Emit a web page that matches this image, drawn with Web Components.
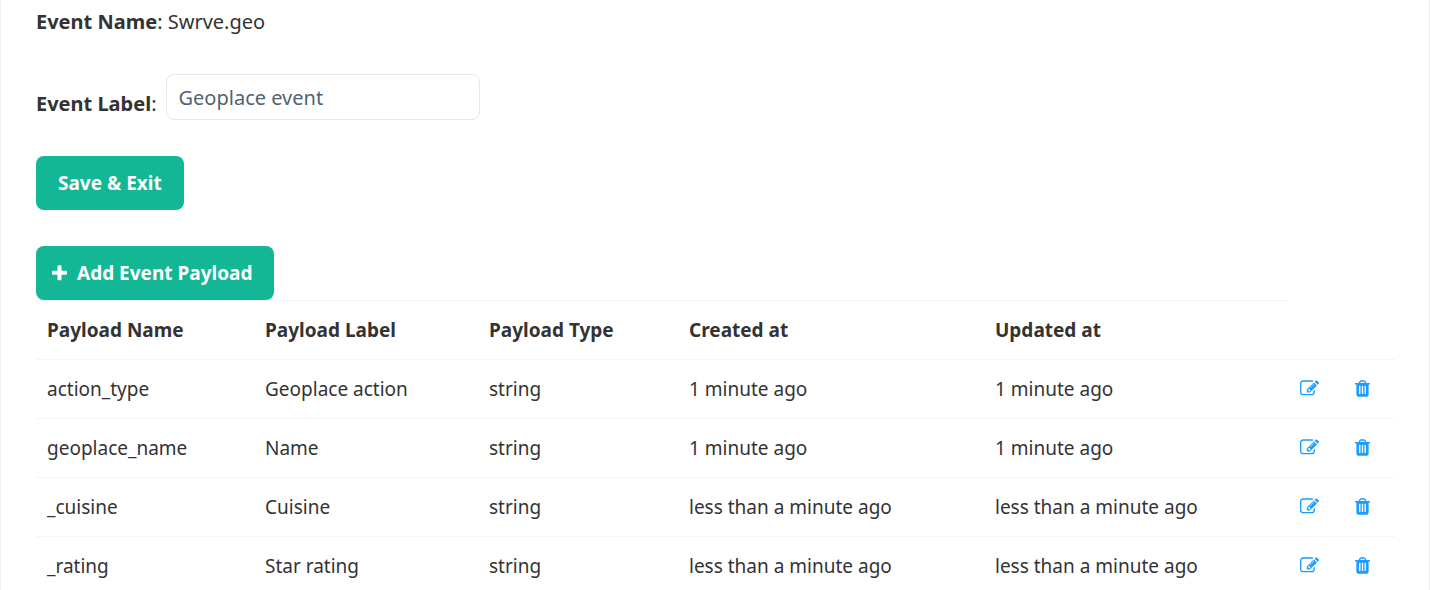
<!DOCTYPE html>
<html lang="en">
<head>
<meta charset="utf-8">
<title>Edit event</title>
<style>
  html { scrollbar-width: none; }
  body { margin: 0; background: #fff; color: #333; font: 20px/28px "Noto Sans", sans-serif; }
</style>
</head>
<body>
<event-page></event-page>
<script>
const ICONS = {
  plus: 'M1600 736v192q0 40-28 68t-68 28h-416v416q0 40-28 68t-68 28h-192q-40 0-68-28t-28-68v-416h-416q-40 0-68-28t-28-68v-192q0-40 28-68t68-28h416v-416q0-40 28-68t68-28h192q40 0 68 28t28 68v416h416q40 0 68 28t28 68z',
  edit: 'M888 1184l116-116-152-152-116 116v56h96v96h56zm440-720q-16-16-33 1l-350 350q-17 17-1 33t33-1l350-350q17-17 1-33zm80 594v190q0 119-84.5 203.5t-203.5 84.5h-832q-119 0-203.5-84.5t-84.5-203.5v-832q0-119 84.5-203.5t203.5-84.5h832q63 0 117 25 15 7 18 23 3 17-9 29l-49 49q-14 14-32 8-23-6-45-6h-832q-66 0-113 47t-47 113v832q0 66 47 113t113 47h832q66 0 113-47t47-113v-126q0-13 9-22l64-64q15-15 35-7t20 29zm-96-738l288 288-672 672h-288v-288zm444 132l-92 92-288-288 92-92q28-28 68-28t68 28l152 152q28 28 28 68t-28 68z',
  trash: 'M704 1376v-704q0-14-9-23t-23-9h-64q-14 0-23 9t-9 23v704q0 14 9 23t23 9h64q14 0 23-9t9-23zm256 0v-704q0-14-9-23t-23-9h-64q-14 0-23 9t-9 23v704q0 14 9 23t23 9h64q14 0 23-9t9-23zm256 0v-704q0-14-9-23t-23-9h-64q-14 0-23 9t-9 23v704q0 14 9 23t23 9h64q14 0 23-9t9-23zm-544-992h448l-48-117q-7-9-17-11h-317q-10 2-17 11zm928 32v64q0 14-9 23t-23 9h-96v948q0 83-47 143.5t-113 60.5h-832q-66 0-113-58.5t-47-141.5v-952h-96q-14 0-23-9t-9-23v-64q0-14 9-23t23-9h309l70-167q15-37 54-63t79-26h320q40 0 79 26t54 63l70 167h309q14 0 23 9t9 23z'
};

class UiIcon extends HTMLElement {
  connectedCallback() {
    this.attachShadow({ mode: 'open' }).innerHTML = `
      <style>
        :host { display: block; width: 19px; height: 19px; }
        svg { display: block; width: 100%; height: 100%; fill: currentColor; }
      </style>
      <svg viewBox="0 0 1792 1792" aria-hidden="true"><path d="${ICONS[this.getAttribute('name')]}"/></svg>`;
  }
}
customElements.define('ui-icon', UiIcon);

class UiButton extends HTMLElement {
  connectedCallback() {
    this.attachShadow({ mode: 'open' }).innerHTML = `
      <style>
        :host { display: block; }
        button { display: flex; align-items: center; height: 54px; padding: 0 22px; border: 0; border-radius: 8px;
          background: #13b795; color: #fff; font: 700 19px/28px "Noto Sans", sans-serif; cursor: pointer; }
        :host([icon]) button { padding-left: 14px; gap: 8px; }
      </style>
      <button type="button">${this.hasAttribute('icon') ? `<ui-icon name="${this.getAttribute('icon')}"></ui-icon>` : ''}<span><slot></slot></span></button>`;
  }
}
customElements.define('ui-button', UiButton);

class EventField extends HTMLElement {
  connectedCallback() {
    this.attachShadow({ mode: 'open' }).innerHTML = `
      <style>
        :host { display: flex; align-items: flex-end; gap: 9px; }
        label { padding-bottom: 2px; }
        input { box-sizing: border-box; width: 314px; height: 46px; padding: 0 12px; border: 1px solid #e3e8eb;
          border-radius: 8px; background: #fff; color: #506372; font: 20px/28px "Noto Sans", sans-serif; }
      </style>
      <label for="field"><b>${this.getAttribute('label')}</b>:</label>
      <input id="field" type="text" value="${this.getAttribute('value')}">`;
  }
}
customElements.define('event-field', EventField);

class PayloadTable extends HTMLElement {
  connectedCallback() {
    const rows = [
      ['action_type', 'Geoplace action', 'string', '1 minute ago', '1 minute ago'],
      ['geoplace_name', 'Name', 'string', '1 minute ago', '1 minute ago'],
      ['_cuisine', 'Cuisine', 'string', 'less than a minute ago', 'less than a minute ago'],
      ['_rating', 'Star rating', 'string', 'less than a minute ago', 'less than a minute ago']
    ];
    this.attachShadow({ mode: 'open' }).innerHTML = `
      <style>
        :host { display: block; font-size: 19px; }
        table { width: 100%; table-layout: fixed; border-collapse: separate; border-spacing: 0; }
        th, td { box-sizing: border-box; height: 59px; padding: 0 11px; border-top: 1px solid #f3f6f8;
          text-align: left; vertical-align: middle; white-space: nowrap; }
        th { font-weight: 700; }
        a { display: block; width: 19px; padding-bottom: 2px; color: #189eff; }
      </style>
      <table>
        <colgroup>
          <col style="width:218px"><col style="width:224px"><col style="width:200px"><col style="width:306px">
          <col style="width:305px"><col style="width:53px"><col style="width:53px">
        </colgroup>
        <thead><tr>${['Payload Name', 'Payload Label', 'Payload Type', 'Created at', 'Updated at'].map(h => `<th scope="col">${h}</th>`).join('')}</tr></thead>
        <tbody>${rows.map(r => `<tr>${r.map(c => `<td>${c}</td>`).join('')}
          <td><a href="#edit" aria-label="Edit ${r[0]}"><ui-icon name="edit"></ui-icon></a></td>
          <td><a href="#delete" aria-label="Delete ${r[0]}"><ui-icon name="trash"></ui-icon></a></td></tr>`).join('')}
        </tbody>
      </table>`;
  }
}
customElements.define('payload-table', PayloadTable);

class EventPage extends HTMLElement {
  connectedCallback() {
    this.attachShadow({ mode: 'open' }).innerHTML = `
      <style>
        :host { display: block; }
        main { display: flex; flex-direction: column; align-items: flex-start; gap: 36px; box-sizing: border-box;
          min-height: 100vh; padding: 8px 35px 0; border: solid #ecf1f5; border-width: 0 1px; }
        p { margin: 0 0 2px; }
        section { width: 100%; }
      </style>
      <main>
        <p><b>Event Name</b>: Swrve.geo</p>
        <event-field label="Event Label" value="Geoplace event"></event-field>
        <ui-button>Save &amp; Exit</ui-button>
        <section>
          <ui-button icon="plus">Add Event Payload</ui-button>
          <payload-table></payload-table>
        </section>
      </main>`;
  }
}
customElements.define('event-page', EventPage);
</script>
</body>
</html>
